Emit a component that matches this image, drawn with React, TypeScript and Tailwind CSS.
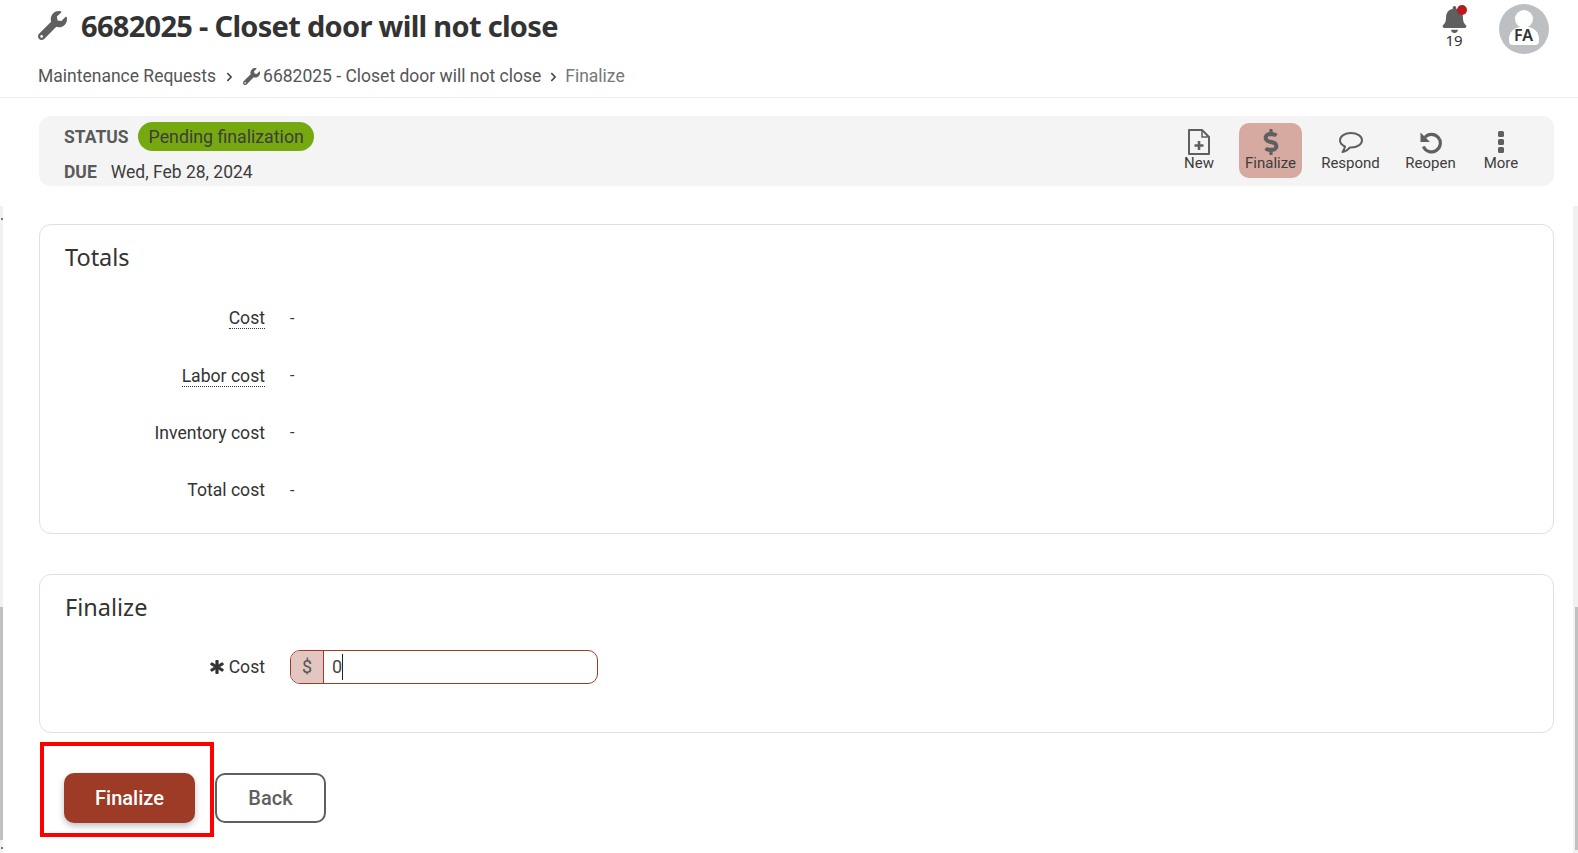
import React from 'react';
import { FaAsterisk, FaBell, FaChevronRight, FaDollarSign, FaWrench } from 'react-icons/fa';

function ActionButton({ label, width, active, children }: { label: string; width: string; active?: boolean; children: React.ReactNode }) {
  return (
    <div className={`${width} h-[55px] flex flex-col items-center rounded-[10px] ${active ? 'bg-[#d6a9a1]' : ''}`}>
      <div className="h-[31px] pt-[7px] flex items-center justify-center text-[#5f5f5f]">{children}</div>
      <span className="text-[15px] leading-[19px] text-[#3d3d3d]">{label}</span>
    </div>
  );
}

function TotalRow({ label, hint }: { label: string; hint?: boolean }) {
  return (
    <div className="h-[57.3px] flex items-center">
      <div className="w-[200px] text-right text-[17.6px] text-[#333]">
        <span className={hint ? 'border-b border-dotted border-[#333]' : ''}>{label}</span>
      </div>
      <span className="ml-[25px] text-[#333] text-[16px]">-</span>
    </div>
  );
}

export default function App() {
  return (
    <div className="h-[853px] w-full overflow-hidden bg-white flex flex-col font-['Roboto',sans-serif] text-[#333]">
      <header className="h-[98px] shrink-0 border-b border-[#efefef] pl-[38px] pr-[29px] flex justify-between">
        <div>
          <div className="h-[51px] flex items-center">
            <FaWrench className="text-[#5f5f5f] w-[29px] h-[29px]" />
            <h1 className="ml-[14px] text-[29px] font-bold font-['Noto_Sans',sans-serif] tracking-[-0.7px] text-[#333]">6682025 - Closet door will not close</h1>
          </div>
          <nav className="mt-[12px] flex items-center text-[17.5px] text-[#555]">
            <span>Maintenance Requests</span>
            <FaChevronRight className="ml-[9px] mt-[2px] mr-[9px] w-[9px] h-[10px] text-[#444]" />
            <FaWrench className="w-[17px] h-[17px] mr-[3px] text-[#5f5f5f]" />
            <span>6682025 - Closet door will not close</span>
            <FaChevronRight className="ml-[8px] mt-[2px] mr-[7px] w-[9px] h-[10px] text-[#444]" />
            <span className="text-[#777]">Finalize</span>
          </nav>
        </div>
        <div className="flex items-start pt-[4px]">
          <div className="relative w-[30px] mr-[30px] pt-[2px] flex flex-col items-center">
            <FaBell className="w-[27px] h-[27px] text-[#5f5f5f]" />
            <span className="absolute top-[1px] right-[2px] w-[10px] h-[10px] rounded-full bg-[#b71c1c]" />
            <span className="text-[15px] leading-[15px] font-['Noto_Sans',sans-serif] text-[#333]">19</span>
          </div>
          <div className="relative w-[50px] h-[50px] rounded-full bg-[#bcc0c2] overflow-hidden flex justify-center">
            <span className="absolute top-[6px] left-[16px] w-[18px] h-[18px] rounded-full bg-white" />
            <span className="absolute top-[23px] left-[10px] w-[30px] h-[18px] rounded-t-[12px] rounded-b-[4px] bg-white" />
            <span className="absolute top-[19px] left-[15px] text-[16px] font-semibold font-['Noto_Sans',sans-serif] text-[#333]">FA</span>
          </div>
        </div>
      </header>

      <div className="shrink-0 pl-[39px] pr-[24px] pt-[18px]">
        <div className="h-[70px] rounded-[12px] bg-[#f4f4f4] pl-[25px] pr-[23px] flex items-start justify-between">
          <div className="pt-[6px]">
            <div className="flex items-center h-[29px]">
              <span className="pt-[1px] text-[17.5px] font-bold text-[#5a5a5a]">STATUS</span>
              <span className="ml-[9px] h-[29px] pl-[11px] pr-[10px] rounded-full bg-[#76a90f] text-[17.75px] leading-[30px] text-[#3d3d3d]">Pending finalization</span>
            </div>
            <div className="mt-[9px] flex items-center h-[24px]">
              <span className="text-[17.5px] font-bold text-[#5a5a5a]">DUE</span>
              <span className="ml-[14px] text-[17.5px] text-[#3d3d3d]">Wed, Feb 28, 2024</span>
            </div>
          </div>
          <div className="flex gap-[9px] pt-[7px]">
            <ActionButton label="New" width="w-[62px]">
              <svg width="24" height="28" viewBox="0 0 24 28" fill="none" stroke="currentColor" strokeWidth="2">
                <path d="M2 2h13l7 7v17H2z" strokeLinejoin="round" />
                <path d="M15 2v7h7" strokeWidth="1.5" />
                <path d="M12 13v9M7.500 17.500h9" strokeWidth="2.6" />
              </svg>
            </ActionButton>
            <ActionButton label="Finalize" width="w-[63px]" active><FaDollarSign className="w-[24px] h-[26px]" /></ActionButton>
            <ActionButton label="Respond" width="w-[79px]">
              <svg width="26" height="23" viewBox="0 0 26 23" fill="none" stroke="currentColor" strokeWidth="2">
                <path d="M13 2C6.800 2 2 5.300 2 9.300c0 2.600 2 4.900 5 6.200-.3 1.800-1.200 3.700-2.500 5.500 3-.6 5.600-2.200 7.500-4.600h1c6.200 0 11-3 11-7.100S19.200 2 13 2z" strokeLinejoin="round" />
              </svg>
            </ActionButton>
            <ActionButton label="Reopen" width="w-[63px]">
              <svg width="24" height="24" viewBox="0 0 24 24" fill="none" stroke="currentColor" strokeWidth="3.200">
                <path d="M6 7.200a8.800 8.800 0 1 1-1.600 9.300" />
                <path d="M1.500 2.500v9.500h9.500z" fill="currentColor" stroke="none" />
              </svg>
            </ActionButton>
            <ActionButton label="More" width="w-[60px]">
              <svg width="8" height="22" viewBox="0 0 8 22" fill="currentColor">
                <rect x="1" y="0" width="6" height="6" rx="1.5" />
                <rect x="1" y="8" width="6" height="6" rx="1.5" />
                <rect x="1" y="16" width="6" height="6" rx="1.5" />
              </svg>
            </ActionButton>
          </div>
        </div>
      </div>

      <div className="flex-1 min-h-0 flex mt-[20px]">
        <div className="w-[3px] shrink-0 bg-[#f1f1f1] flex flex-col items-end">
          <div className="h-[12px] shrink-0" />
          <div className="w-[2px] h-[2px] shrink-0 bg-[#777]" />
          <div className="h-[387px] shrink-0" />
          <div className="w-[3px] h-[233px] shrink-0 bg-[#c1c1c1]" />
          <div className="h-[7px] shrink-0" />
          <div className="w-[2px] h-[2px] shrink-0 bg-[#777]" />
        </div>

        <main className="flex-1 min-w-0 pl-[36px] pr-[19px] pt-[18px]">
          <section className="h-[310px] rounded-[12px] border border-[#e0e0e0] pl-[25px] pt-[14px]">
            <h2 className="text-[23.5px] leading-[36px] font-['Noto_Sans',sans-serif] text-[#333]">Totals</h2>
            <div className="mt-[15px]">
              <TotalRow label="Cost" hint />
              <TotalRow label="Labor cost" hint />
              <TotalRow label="Inventory cost" />
              <TotalRow label="Total cost" />
            </div>
          </section>

          <section className="mt-[40px] h-[159px] rounded-[12px] border border-[#e0e0e0] pl-[25px] pt-[14px]">
            <h2 className="text-[23.5px] leading-[36px] font-['Noto_Sans',sans-serif] text-[#333]">Finalize</h2>
            <div className="mt-[25px] flex items-center">
              <div className="w-[200px] flex items-center justify-end text-[17.6px] text-[#333]">
                <FaAsterisk className="w-[14px] h-[14px] mr-[5px]" stroke="currentColor" strokeWidth={30} />
                <span>Cost</span>
              </div>
              <div className="ml-[25px] w-[308px] h-[34px] rounded-[10px] border border-[#9e3b26] overflow-hidden flex">
                <span className="w-[33px] shrink-0 bg-[#e3c6c2] border-r border-[#9e3b26] text-center text-[18px] leading-[32px] text-[#555]">$</span>
                <span className="pl-[8px] text-[18px] leading-[32px] text-[#444]">0</span>
                <span className="w-px h-[26px] mt-[3px] bg-[#222]" />
              </div>
            </div>
          </section>

          <div className="relative mt-[40px] flex items-center gap-[20px] pl-[25px]">
            <div className="absolute left-[1px] top-[-31px] w-[174px] h-[95px] border-[4px] border-[#ff0000]" />
            <button className="w-[131px] h-[50px] rounded-[10px] bg-[#9e3b26] text-white text-[20px] font-medium shadow-[0_3px_6px_rgba(0,0,0,0.25)]">Finalize</button>
            <button className="w-[111px] h-[50px] rounded-[10px] border-2 border-[#5f5f5f] bg-white text-[#5f5f5f] text-[20px] font-medium">Back</button>
          </div>
        </main>

        <div className="w-[5px] shrink-0 bg-[#f1f1f1] flex flex-col items-end">
          <div className="h-[401px] shrink-0" />
          <div className="w-[3px] h-[243px] shrink-0 bg-[#c1c1c1]" />
        </div>
      </div>
    </div>
  );
}
